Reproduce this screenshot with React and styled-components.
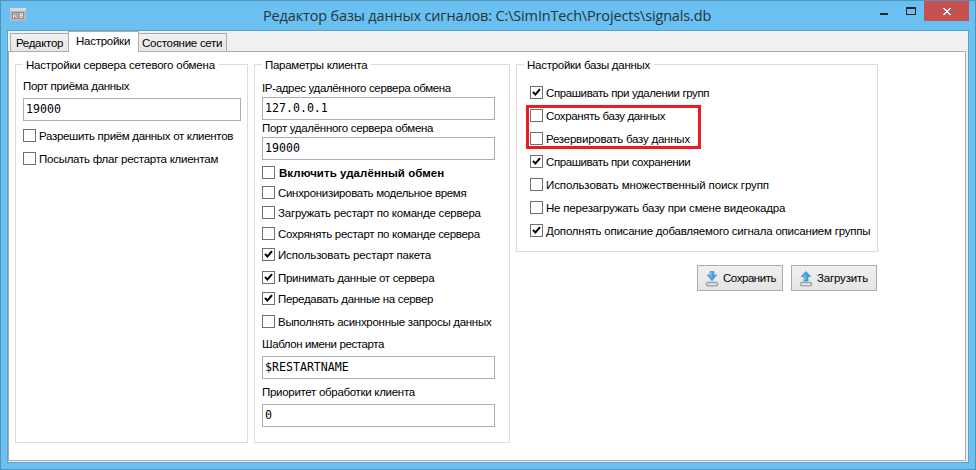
import React from 'react';
import styled, { createGlobalStyle, css } from 'styled-components';

const GlobalStyle = createGlobalStyle`
  *, *::before, *::after { box-sizing: border-box; }
  body {
    margin: 0;
    overflow: hidden;
    font-family: "Liberation Sans", Arial, sans-serif;
    font-size: 11.5px;
    line-height: 13px;
    color: #000;
  }
`;

const Window = styled.div`
  display: flex;
  flex-direction: column;
  width: 976px;
  height: 470px;
  padding: 0 6px 6px;
  border: 1px solid #5393b7;
  background: #69c0f1;
`;

const TitleBar = styled.header`
  display: flex;
  align-items: flex-start;
  height: 29px;
  flex: none;
`;

const AppIcon = styled.svg`
  width: 16px;
  height: 13px;
  margin: 7px 0 0 3px;
`;

const Title = styled.h1`
  flex: 1;
  margin: 0 0 0 237px;
  font: 400 14.5px/29px "Open Sans", "Noto Sans", sans-serif;
  letter-spacing: -0.155px;
  color: #26343d;
  white-space: nowrap;
`;

const WindowControls = styled.div`
  display: flex;
  height: 20px;
`;

const ControlButton = styled.button`
  width: ${(p) => p.$width}px;
  height: 20px;
  padding: 0;
  border: 0;
  background: ${(p) => (p.$close ? '#c75050' : 'transparent')};
  svg { display: block; }
`;

const Client = styled.main`
  display: flex;
  flex-direction: column;
  flex: 1;
  border: 1px solid #57a3cd;
  padding: 0 2px 1px 0;
  background: #f0f0f0;
`;

const TabStrip = styled.nav`
  display: flex;
  align-items: flex-end;
  height: 20px;
  flex: none;
  padding-left: 2px;
`;

const Tab = styled.button`
  width: ${(p) => p.$width}px;
  height: 18px;
  padding: 2px 0 0 ${(p) => p.$indent}px;
  border: 1px solid #acacac;
  border-bottom: 0;
  border-left-width: ${(p) => (p.$last ? 0 : 1)}px;
  border-right-width: ${(p) => (p.$first ? 0 : 1)}px;
  background: linear-gradient(#f1f1f1, #e6e6e6);
  color: #000;
  font: inherit;
  text-align: left;
  letter-spacing: ${(p) => p.$track}px;
  white-space: nowrap;
  ${(p) => p.$active && css`
    z-index: 1;
    height: 21px;
    margin-bottom: -1px;
    padding-bottom: 3px;
    background: #fff;
  `}
`;

const Panel = styled.section`
  display: flex;
  align-items: flex-start;
  gap: 6px;
  flex: 1;
  padding: 12px 0 0 6px;
  border: 1px solid #acacac;
  background: #fff;
`;

const Group = styled.section`
  width: ${(p) => p.$width}px;
  height: ${(p) => p.$height}px;
  padding: 0 0 0 ${(p) => p.$indent}px;
  border: 1px solid #dcdcdc;
`;

const Legend = styled.h2`
  width: max-content;
  height: 13px;
  margin: -7px 0 -6px ${(p) => p.$shift}px;
  padding: 0 4px 0 3px;
  background: #fff;
  font: inherit;
  line-height: 14px;
  letter-spacing: ${(p) => p.$track}px;
  white-space: nowrap;
`;

const FieldLabel = styled.label`
  display: block;
  height: 13px;
  margin-top: ${(p) => p.$top}px;
  letter-spacing: ${(p) => p.$track}px;
  white-space: nowrap;
`;

const Field = styled.input`
  display: block;
  width: ${(p) => p.$width}px;
  height: 23px;
  margin-top: ${(p) => p.$top}px;
  padding: 0 0 1px 2px;
  border: 1px solid #abadb3;
  border-radius: 0;
  outline: 0;
  background: #fff;
  color: #000;
  font: 11.6px "DejaVu Sans Mono", monospace;
`;

const CheckRow = styled.div`
  display: flex;
  align-items: center;
  gap: 3px;
  height: 13px;
  margin-top: ${(p) => p.$top}px;
`;

const Box = styled.span`
  flex: none;
  width: 13px;
  height: 13px;
  border: 1px solid #707070;
  background: #fff;
  svg { display: block; }
`;

const CheckLabel = styled.span`
  height: 13px;
  line-height: 14px;
  letter-spacing: ${(p) => p.$track}px;
  white-space: nowrap;
  ${(p) => p.$bold && css`
    font-weight: 700;
    padding-left: 1px;
  `}
`;

const Highlight = styled.div`
  position: relative;
  margin-top: 10px;
  &::after {
    content: "";
    position: absolute;
    left: -4px;
    top: -4px;
    width: 175px;
    height: 44px;
    border: 3px solid #ed1c24;
    pointer-events: none;
  }
`;

const DatabaseColumn = styled.div`
  display: flex;
  flex-direction: column;
`;

const Actions = styled.div`
  display: flex;
  justify-content: flex-end;
  gap: 8px;
  margin-top: 13px;
  padding-right: 1px;
`;

const ActionButton = styled.button`
  display: flex;
  align-items: center;
  gap: 3px;
  width: 86px;
  height: 26px;
  padding: 1px 0 0 6px;
  border: 1px solid #acacac;
  background: linear-gradient(#f0f0f0, #e5e5e5);
  color: #000;
  font: inherit;
  letter-spacing: ${(p) => p.$track}px;
  white-space: nowrap;
`;

function DriveIcon({ up }) {
  return (
    <svg width="16" height="16" viewBox="0 0 16 16">
      <path d="M3.500 9.500h9l1.500 2.500H2z" fill="#dfe1e2" />
      <rect x="2.300" y="11.300" width="11.400" height="3.700" rx="1.200" fill="#bfc2c4" stroke="#85898c" strokeWidth=".7" />
      <path d="M4 13.200h8" stroke="#f4f5f5" />
      {up
        ? <path d="M8 .5L12.800 5.500H10V10H6V5.500H3.200z" fill="#43a5e3" stroke="#2c88c7" strokeWidth=".6" />
        : <path d="M6 .5h4V4.500l2.800-.8L8 9.700 3.200 3.700 6 4.500z" fill="#43a5e3" stroke="#2c88c7" strokeWidth=".6" />}
      <path d={up ? 'M7 4v5' : 'M7 1v5'} stroke="#8fd2f6" />
    </svg>
  );
}

function Check({ top = 0, checked, bold, track, children }) {
  return (
    <CheckRow $top={top}>
      <Box>
        {checked && (
          <svg width="11" height="11" viewBox="0 0 11 11">
            <path d="M2 4.900L4.400 7.600L9 2.200" fill="none" stroke="#000" strokeWidth="2" />
          </svg>
        )}
      </Box>
      <CheckLabel $bold={bold} $track={track}>{children}</CheckLabel>
    </CheckRow>
  );
}

export default function App() {
  return (
    <>
      <GlobalStyle />
      <Window>
        <TitleBar>
          <AppIcon viewBox="0 0 16 13">
            <rect width="16" height="13" fill="#b9b9b9" />
            <rect width="16" height="3" fill="#d9d9d9" />
            <rect x="2" y="4" width="5.5" height="7" fill="#8a8a8a" />
            <rect x="8.5" y="4" width="5.5" height="7" fill="#8a8a8a" />
            <path d="M3.500 10V6.500L4.700 5.200L6 6.500V10M3.500 8H6" fill="none" stroke="#f2f2f2" strokeWidth=".9" />
            <path d="M10 5.500V9.500H12.500V5.500zM10 7.500h2.500" fill="none" stroke="#f2f2f2" strokeWidth=".9" />
          </AppIcon>
          <Title>Редактор базы данных сигналов: C:\SimInTech\Projects\signals.db</Title>
          <WindowControls>
            <ControlButton $width={28} aria-label="Свернуть">
              <svg width="28" height="20"><rect x="8" y="12" width="8" height="2" fill="#262626" /></svg>
            </ControlButton>
            <ControlButton $width={24} aria-label="Развернуть">
              <svg width="24" height="20">
                <path d="M6 6h10v8H6zM7 8v5h8V8z" fill="#262626" fillRule="evenodd" />
              </svg>
            </ControlButton>
            <ControlButton $width={45} $close aria-label="Закрыть">
              <svg width="45" height="20" shapeRendering="crispEdges">
                <path d="M19 7h2v1h1v1h2V8h1V7h2v1h-1v1h-1v1h-1v1h1v1h1v1h1v1h-2v-1h-1v-1h-2v1h-1v1h-2v-1h1v-1h1v-1h1v-1h-1V9h-1V8h-1z" fill="#fff" />
              </svg>
            </ControlButton>
          </WindowControls>
        </TitleBar>
        <Client>
          <TabStrip>
            <Tab $first $width={58} $indent={5} $track={-0.3}>Редактор</Tab>
            <Tab $active $width={71} $indent={7} $track={-0.26}>Настройки</Tab>
            <Tab $last $width={88} $indent={3} $track={-0.27}>Состояние сети</Tab>
          </TabStrip>
          <Panel>
            <Group $width={233} $height={379} $indent={7}>
              <Legend $shift={0} $track={-0.2}>Настройки сервера сетевого обмена</Legend>
              <FieldLabel $top={15} $track={-0.33}>Порт приёма данных</FieldLabel>
              <Field $top={5} $width={218} defaultValue="19000" />
              <Check top={8} track={-0.31}>Разрешить приём данных от клиентов</Check>
              <Check top={10} track={-0.26}>Посылать флаг рестарта клиентам</Check>
            </Group>
            <Group $width={256} $height={379} $indent={7}>
              <Legend $shift={0} $track={-0.28}>Параметры клиента</Legend>
              <FieldLabel $top={17} $track={-0.34}>IP-адрес удалённого сервера обмена</FieldLabel>
              <Field $top={2} $width={233} defaultValue="127.0.0.1" />
              <FieldLabel $top={2} $track={-0.3}>Порт удалённого сервера обмена</FieldLabel>
              <Field $top={2} $width={233} defaultValue="19000" />
              <Check top={6} bold track={0.06}>Включить удалённый обмен</Check>
              <Check top={7} track={-0.31}>Синхронизировать модельное время</Check>
              <Check top={7} track={-0.22}>Загружать рестарт по команде сервера</Check>
              <Check top={8} track={-0.3}>Сохрянять рестарт по команде сервера</Check>
              <Check top={8} checked track={-0.16}>Использовать рестарт пакета</Check>
              <Check top={10} checked track={-0.3}>Принимать данные от сервера</Check>
              <Check top={8} checked track={-0.32}>Передавать данные на сервер</Check>
              <Check top={10} track={-0.29}>Выполнять асинхронные запросы данных</Check>
              <FieldLabel $top={10} $track={-0.39}>Шаблон имени рестарта</FieldLabel>
              <Field $top={5} $width={233} defaultValue="$RESTARTNAME" />
              <FieldLabel $top={7} $track={-0.3}>Приоритет обработки клиента</FieldLabel>
              <Field $top={5} $width={233} defaultValue="0" />
            </Group>
            <DatabaseColumn>
              <Group $width={362} $height={188} $indent={13}>
                <Legend $shift={-6} $track={-0.27}>Настройки базы данных</Legend>
                <Check top={21} checked track={-0.39}>Спрашивать при удалении групп</Check>
                <Highlight>
                  <Check track={-0.36}>Сохранять базу данных</Check>
                  <Check top={10} track={-0.23}>Резервировать базу данных</Check>
                </Highlight>
                <Check top={10} checked track={-0.41}>Спрашивать при сохранении</Check>
                <Check top={10} track={-0.12}>Использовать множественный поиск групп</Check>
                <Check top={10} track={-0.2}>Не перезагружать базу при смене видеокадра</Check>
                <Check top={10} checked track={-0.22}>Дополнять описание добавляемого сигнала описанием группы</Check>
              </Group>
              <Actions>
                <ActionButton $track={-0.45}><DriveIcon />Сохранить</ActionButton>
                <ActionButton $track={-0.17}><DriveIcon up />Загрузить</ActionButton>
              </Actions>
            </DatabaseColumn>
          </Panel>
        </Client>
      </Window>
    </>
  );
}
